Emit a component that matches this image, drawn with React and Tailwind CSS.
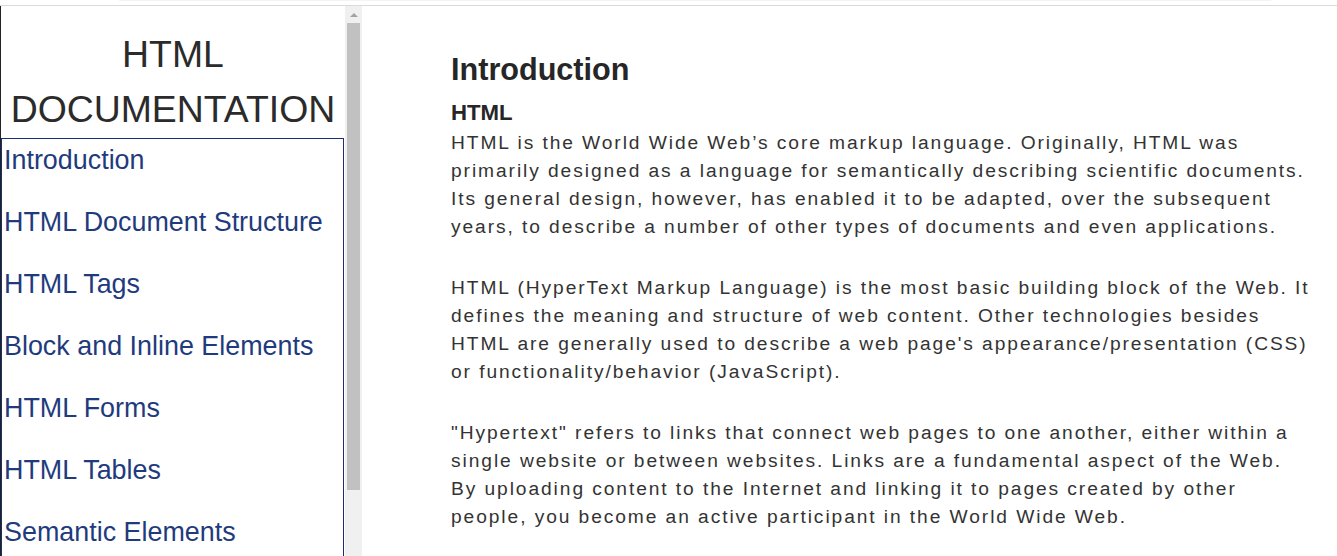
const NAV_ITEMS = [
  'Introduction',
  'HTML Document Structure',
  'HTML Tags',
  'Block and Inline Elements',
  'HTML Forms',
  'HTML Tables',
  'Semantic Elements',
];

const PARAGRAPHS = [
  'HTML is the World Wide Web\u2019s core markup language. Originally, HTML was primarily designed as a language for semantically describing scientific documents. Its general design, however, has enabled it to be adapted, over the subsequent years, to describe a number of other types of documents and even applications.',
  "HTML (HyperText Markup Language) is the most basic building block of the Web. It defines the meaning and structure of web content. Other technologies besides HTML are generally used to describe a web page's appearance/presentation (CSS) or functionality/behavior (JavaScript).",
  '"Hypertext" refers to links that connect web pages to one another, either within a single website or between websites. Links are a fundamental aspect of the Web. By uploading content to the Internet and linking it to pages created by other people, you become an active participant in the World Wide Web.',
];

function Scrollbar() {
  return (
    <div className="w-[17px] shrink-0 bg-[#f0f0f0] flex flex-col">
      <div className="h-[17px] flex items-center justify-center">
        <div className="w-0 h-0 border-l-[4px] border-r-[4px] border-b-[4px] border-l-transparent border-r-transparent border-b-[#a3a3a3]" />
      </div>
      <div className="mx-[2px] h-[467px] bg-[#c1c1c1]" />
    </div>
  );
}

export default function App() {
  return (
    <div className="h-[556px] overflow-hidden bg-white flex flex-col font-['Liberation_Sans',Arial,sans-serif]">
      {/* top strip */}
      <div className="h-[6px] shrink-0 flex flex-col">
        <div className="h-[1px] ml-[119px] w-[1152px] bg-[#f4f4f4]" />
        <div className="h-[4px]" />
        <div className="h-[1px] bg-[#dadada]" />
      </div>

      <div className="flex flex-1 min-h-0">
        {/* sidebar */}
        <aside className="w-[362px] shrink-0 flex border-l border-[#222]">
          <div className="w-[344px] overflow-hidden">
            <h1 className="pt-[21px] text-center text-[37.4px] leading-[55px] text-[#2b2b2b] font-normal">
              HTML
              <br />
              DOCUMENTATION
            </h1>
            <ul className="mt-[1px] w-[343px] border border-[#1b2f6e] pt-[6px]">
              {NAV_ITEMS.map(item => (
                <li key={item} className="h-[62px]">
                  <a href="#" className="block pl-[2px] text-[26.9px] leading-[31px] text-[#1f3b7d] whitespace-nowrap">
                    {item}
                  </a>
                </li>
              ))}
            </ul>
          </div>
          <Scrollbar />
        </aside>

        {/* main content */}
        <main className="flex-1 pl-[89px] pt-[45px] overflow-hidden">
          <div className="w-[862px]">
            <h2 className="text-[30.6px] leading-[36px] font-bold text-[#262626]">Introduction</h2>
            <h3 className="mt-[12px] text-[22.2px] leading-[28px] font-bold text-[#262626]">HTML</h3>
            <div className="mt-[2px] flex flex-col gap-[33px]">
              {PARAGRAPHS.map((p, i) => (
                <p key={i} className="text-[19.2px] leading-[28px] tracking-[1.92px] text-[#333]">
                  {p}
                </p>
              ))}
            </div>
          </div>
        </main>
      </div>
    </div>
  );
}
